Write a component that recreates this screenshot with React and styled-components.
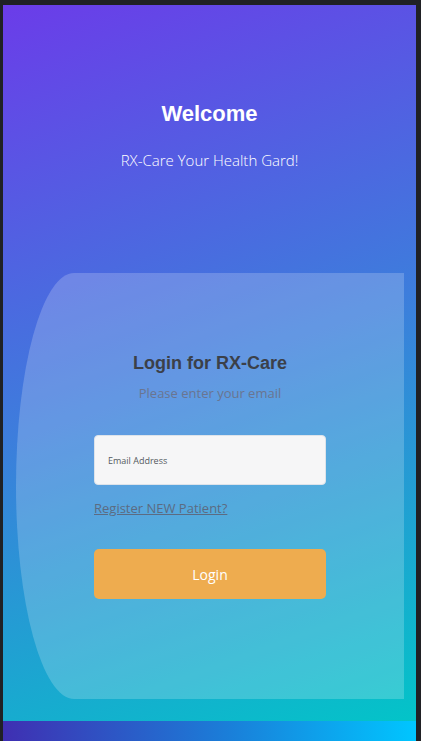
import React from "react";
import styled, { createGlobalStyle } from "styled-components";

const GlobalStyle = createGlobalStyle`
  html, body {
    margin: 0;
    padding: 0;
    background: #202125;
  }
  * {
    box-sizing: border-box;
  }
`;

const Frame = styled.div`
  margin: 5px 5px 0 3px;
  display: flex;
  flex-direction: column;
  height: 736px;
`;

const Hero = styled.main`
  flex: 1;
  display: flex;
  flex-direction: column;
  align-items: center;
  background: linear-gradient(160deg, #6b3ce9 0%, #3d7ddc 50%, #03c4c8 100%);
  padding: 95px 0 22px;
`;

const Title = styled.h1`
  margin: 0;
  font-family: "Liberation Sans", Arial, sans-serif;
  font-weight: 700;
  font-size: 22px;
  line-height: 28px;
  color: #fff;
`;

const Tagline = styled.p`
  margin: 22px 0 0;
  font-family: "Open Sans", sans-serif;
  font-weight: 300;
  font-size: 15px;
  line-height: 20px;
  color: #fff;
`;

const Card = styled.section`
  margin-top: 103px;
  align-self: stretch;
  margin-left: 13px;
  margin-right: 12px;
  height: 426px;
  background: rgba(255, 255, 255, 0.2);
  border-radius: 15% 0 0 15% / 50% 0 0 50%;
  display: flex;
  flex-direction: column;
  align-items: center;
  padding-top: 78px;
`;

const CardTitle = styled.h2`
  margin: 0;
  font-family: "Liberation Sans", Arial, sans-serif;
  font-weight: 700;
  font-size: 18px;
  line-height: 24px;
  color: #3b4049;
`;

const Hint = styled.p`
  margin: 9px 0 0;
  font-family: "Open Sans", sans-serif;
  font-size: 13px;
  line-height: 18px;
  color: #6a7590;
`;

const Form = styled.form`
  width: 232px;
  margin-top: 33px;
  display: flex;
  flex-direction: column;
  align-items: flex-start;
`;

const EmailInput = styled.input`
  width: 100%;
  height: 50px;
  border: 1px solid #dde3ea;
  border-radius: 4px;
  background: #f6f6f7;
  padding: 0 13px;
  font-family: "Open Sans", sans-serif;
  font-size: 9px;
  color: #444;
  outline: none;

  &::placeholder {
    color: #555a60;
  }
`;

const RegisterLink = styled.a`
  margin-top: 14px;
  font-family: "Open Sans", sans-serif;
  font-size: 13px;
  line-height: 18px;
  color: #5c6b82;
  text-decoration: underline;
  cursor: pointer;
`;

const LoginButton = styled.button`
  margin-top: 32px;
  width: 100%;
  height: 50px;
  border: none;
  border-radius: 5px;
  background: #eeac4f;
  color: #fff;
  font-family: "Open Sans", sans-serif;
  font-size: 14px;
  cursor: pointer;
`;

const Strip = styled.footer`
  height: 21px;
  background: linear-gradient(to right, #3f2fb2 0%, #1a7fd9 55%, #00c6ff 100%);
`;

export default function App() {
  return (
    <>
      <GlobalStyle />
      <Frame>
        <Hero>
          <Title>Welcome</Title>
          <Tagline>RX-Care Your Health Gard!</Tagline>
          <Card>
            <CardTitle>Login for RX-Care</CardTitle>
            <Hint>Please enter your email</Hint>
            <Form onSubmit={(e) => e.preventDefault()}>
              <EmailInput type="email" placeholder="Email Address" />
              <RegisterLink>Register NEW Patient?</RegisterLink>
              <LoginButton type="submit">Login</LoginButton>
            </Form>
          </Card>
        </Hero>
        <Strip />
      </Frame>
    </>
  );
}
